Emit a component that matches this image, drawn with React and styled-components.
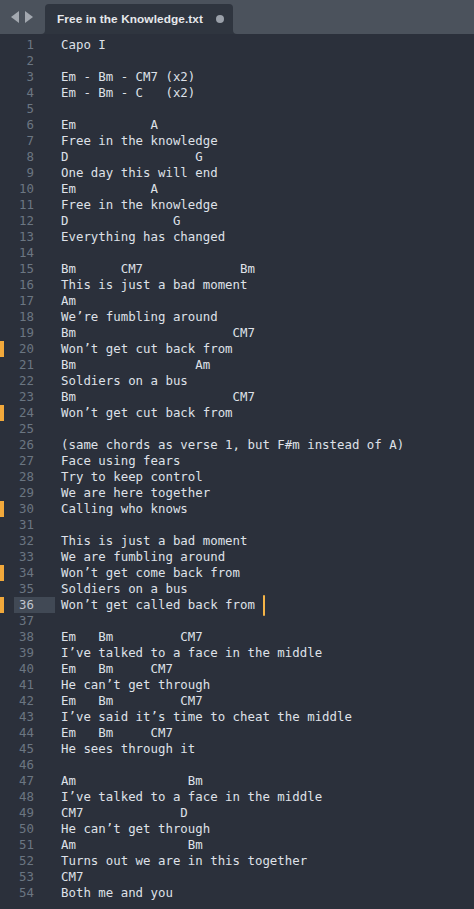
import React from "react";
import styled, { createGlobalStyle } from "styled-components";

const Global = createGlobalStyle`
  html, body { margin: 0; padding: 0; background: #2b303b; }
  body { width: 474px; height: 909px; overflow: hidden; }
`;

const Window = styled.div`
  width: 474px;
  height: 909px;
  background: #2b303b;
  display: flex;
  flex-direction: column;
  overflow: hidden;
`;

const TabBar = styled.div`
  height: 34px;
  display: flex;
  background: #2f353f;
  flex-shrink: 0;
`;

const Nav = styled.div`
  width: 45px;
  background: #4b525c;
  border-bottom-right-radius: 4px;
  display: flex;
  align-items: center;
  justify-content: center;
  gap: 6px;
  padding-right: 2px;
  box-sizing: border-box;
`;

const Arrow = styled.span`
  width: 0;
  height: 0;
  border-top: 6px solid transparent;
  border-bottom: 6px solid transparent;
  ${(p) =>
    p.$dir === "left"
      ? "border-right: 8px solid #a3a8b0;"
      : "border-left: 8px solid #a3a8b0;"}
`;

const TabSlot = styled.div`
  width: 188px;
  background: #4b525c;
  display: flex;
  padding-top: 4px;
  box-sizing: border-box;
`;

const Tab = styled.div`
  flex: 1;
  background: #2f353f;
  border-radius: 4px 4px 0 0;
  display: flex;
  align-items: center;
  padding-left: 12px;
`;

const TabTitle = styled.span`
  font-family: "Liberation Sans", Arial, sans-serif;
  font-size: 11.8px;
  font-weight: 700;
  color: #e6e8ec;
  letter-spacing: 0.1px;
`;

const Dot = styled.span`
  width: 8px;
  height: 8px;
  border-radius: 50%;
  background: #9aa0a9;
  margin-left: 13px;
`;

const Filler = styled.div`
  flex: 1;
  background: #4b525c;
  border-bottom-left-radius: 4px;
`;

const Editor = styled.div`
  flex: 1;
  padding-top: 3px;
  display: flex;
  flex-direction: column;
`;

const Row = styled.div`
  display: flex;
  height: 16px;
`;

const Marker = styled.div`
  width: 4px;
  background: ${(p) => (p.$on ? "#f2a93b" : "transparent")};
  flex-shrink: 0;
`;

const Gutter = styled.div`
  width: 51px;
  flex-shrink: 0;
  display: flex;
  padding-left: 10px;
  box-sizing: border-box;
`;

const Num = styled.div`
  flex: 1;
  text-align: right;
  padding-right: 21px;
  font-family: "DejaVu Sans Mono", Menlo, monospace;
  font-size: 12.4px;
  line-height: 16px;
  color: ${(p) => (p.$active ? "#c0c5ce" : "#6b7682")};
  background: ${(p) => (p.$active ? "#414955" : "transparent")};
`;

const Code = styled.div`
  padding-left: 6px;
  font-family: "DejaVu Sans Mono", Menlo, monospace;
  font-size: 12.4px;
  line-height: 16px;
  color: #dfe1e8;
  white-space: pre;
  display: flex;
  align-items: center;
`;

const Caret = styled.span`
  display: inline-block;
  width: 2px;
  height: 21px;
  background: #f5b447;
  margin-left: 1px;
  border-radius: 1px;
`;

// place chords at column positions: c([col, text], ...)
const c = (...items) => {
  let s = "";
  items.forEach(([col, t]) => {
    while (s.length < col) s += " ";
    s += t;
  });
  return s;
};

const lines = [
  "Capo I",
  "",
  "Em - Bm - CM7 (x2)",
  "Em - Bm - C   (x2)",
  "",
  c([0, "Em"], [12, "A"]),
  "Free in the knowledge",
  c([0, "D"], [18, "G"]),
  "One day this will end",
  c([0, "Em"], [12, "A"]),
  "Free in the knowledge",
  c([0, "D"], [15, "G"]),
  "Everything has changed",
  "",
  c([0, "Bm"], [8, "CM7"], [24, "Bm"]),
  "This is just a bad moment",
  "Am",
  "We\u2019re fumbling around",
  c([0, "Bm"], [23, "CM7"]),
  "Won\u2019t get cut back from",
  c([0, "Bm"], [18, "Am"]),
  "Soldiers on a bus",
  c([0, "Bm"], [23, "CM7"]),
  "Won\u2019t get cut back from",
  "",
  "(same chords as verse 1, but F#m instead of A)",
  "Face using fears",
  "Try to keep control",
  "We are here together",
  "Calling who knows",
  "",
  "This is just a bad moment",
  "We are fumbling around",
  "Won\u2019t get come back from",
  "Soldiers on a bus",
  "Won\u2019t get called back from ",
  "",
  c([0, "Em"], [5, "Bm"], [16, "CM7"]),
  "I\u2019ve talked to a face in the middle",
  c([0, "Em"], [5, "Bm"], [12, "CM7"]),
  "He can\u2019t get through",
  c([0, "Em"], [5, "Bm"], [16, "CM7"]),
  "I\u2019ve said it\u2019s time to cheat the middle",
  c([0, "Em"], [5, "Bm"], [12, "CM7"]),
  "He sees through it",
  "",
  c([0, "Am"], [17, "Bm"]),
  "I\u2019ve talked to a face in the middle",
  c([0, "CM7"], [16, "D"]),
  "He can\u2019t get through",
  c([0, "Am"], [17, "Bm"]),
  "Turns out we are in this together",
  "CM7",
  "Both me and you",
];

const modified = new Set([20, 24, 30, 34, 36]);
const activeLine = 36;

export default function App() {
  return (
    <Window>
      <Global />
      <TabBar>
        <Nav>
          <Arrow $dir="left" />
          <Arrow $dir="right" />
        </Nav>
        <TabSlot>
          <Tab>
            <TabTitle>Free in the Knowledge.txt</TabTitle>
            <Dot />
          </Tab>
        </TabSlot>
        <Filler />
      </TabBar>
      <Editor>
        {lines.map((text, i) => {
          const n = i + 1;
          return (
            <Row key={n}>
              <Marker $on={modified.has(n)} />
              <Gutter>
                <Num $active={n === activeLine}>{n}</Num>
              </Gutter>
              <Code>
                {text}
                {n === activeLine && <Caret />}
              </Code>
            </Row>
          );
        })}
      </Editor>
    </Window>
  );
}
